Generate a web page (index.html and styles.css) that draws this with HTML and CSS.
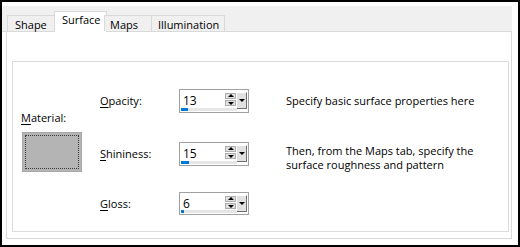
FILE: index.html
```
<!DOCTYPE html>
<html lang="en">
<head>
  <meta charset="UTF-8" />
  <title>Surface</title>
  <link rel="stylesheet" href="styles.css">
</head>
<body>
  <div class="window">
    <div class="tabs">
      <div class="tab tab-shape">Shape</div>
      <div class="tab tab-surface active">Surface</div>
      <div class="tab tab-maps">Maps</div>
      <div class="tab tab-illum">Illumination</div>
    </div>
    <div class="panel">
      <div class="group">
        <div class="material">
          <div class="material-label"><u>M</u>aterial:</div>
          <div class="swatch"><div class="focus"></div></div>
        </div>

        <div class="field-label row1"><u>O</u>pacity:</div>
        <div class="spin row1">
          <span class="spin-value">13</span>
          <div class="spin-arrows">
            <span class="arrow up"></span>
            <span class="arrow down"></span>
          </div>
          <span class="spin-drop"></span>
          <div class="track"><div class="fill" style="width: 13%"></div></div>
        </div>
        <div class="hint row1">Specify basic surface properties here</div>

        <div class="field-label row2"><u>S</u>hininess:</div>
        <div class="spin row2">
          <span class="spin-value">15</span>
          <div class="spin-arrows">
            <span class="arrow up"></span>
            <span class="arrow down"></span>
          </div>
          <span class="spin-drop"></span>
          <div class="track"><div class="fill" style="width: 15%"></div></div>
        </div>
        <div class="hint row2 two-line">Then, from the Maps tab, specify the<br>surface roughness and pattern</div>

        <div class="field-label row3"><u>G</u>loss:</div>
        <div class="spin row3">
          <span class="spin-value">6</span>
          <div class="spin-arrows">
            <span class="arrow up"></span>
            <span class="arrow down"></span>
          </div>
          <span class="spin-drop"></span>
          <div class="track"><div class="fill" style="width: 6%"></div></div>
        </div>
      </div>
    </div>
  </div>
</body>
</html>
```

FILE: styles.css
```
* {
  box-sizing: border-box;
}
body {
  margin: 0;
  font-family: "Open Sans", "Noto Sans", sans-serif;
  font-size: 11px;
  color: #000;
}
u {
  text-decoration-thickness: 1px;
  text-underline-offset: 2px;
}
.window {
  width: 520px;
  height: 247px;
  border: 2px solid #000;
  background: #fff;
  padding-top: 4px;
}
.tabs {
  display: flex;
  align-items: flex-end;
  height: 26px;
  margin-right: 6px;
  padding-left: 5px;
  background: #f0f0f0;
  border-bottom: 1px solid #d9d9d9;
}
.tab {
  height: 16px;
  padding-left: 6px;
  line-height: 17px;
  background: #f0f0f0;
  border: 1px solid #d9d9d9;
  border-bottom: none;
  margin-left: -1px;
}
.tab-shape { width: 49px; margin-left: 0; padding-left: 7px; }
.tab-surface { width: 53px; }
.tab-maps { width: 48px; padding-left: 5px; }
.tab-illum { width: 74px; }
.tab.active {
  height: 21px;
  margin-bottom: -1px;
  margin-left: -2px;
  margin-right: -2px;
  padding-left: 7px;
  line-height: 16px;
  background: #fff;
}
.panel {
  height: 207px;
  margin: 0 6px 0 4px;
  border: 1px solid #d9d9d9;
  border-top: none;
  padding: 29px 2px 6px 5px;
}
.group {
  height: 171px;
  border: 1px solid #dcdcdc;
  padding: 27px 0 0 8px;
  display: grid;
  grid-template-columns: 79px 79px 107px 1fr;
  grid-template-rows: 53px 50px 24px;
}
.material {
  grid-column: 1;
  grid-row: 1 / span 3;
  padding-top: 21px;
}
.material-label {
  line-height: 16px;
}
.swatch {
  width: 60px;
  height: 40px;
  margin-top: 6px;
  margin-left: 1px;
  background: #b4b4b4;
  border: 1px solid #a8a8a8;
  padding: 2px;
}
.focus {
  width: 100%;
  height: 100%;
  border: 1px dotted #3c3c3c;
}
.field-label {
  grid-column: 2;
  line-height: 24px;
}
.row1 { grid-row: 1; }
.row2 { grid-row: 2; }
.row3 { grid-row: 3; }
.spin {
  grid-column: 3;
  position: relative;
  width: 70px;
  height: 24px;
  border: 1px solid #a0a0a0;
  background: #fff;
  display: flex;
  align-items: flex-start;
  padding: 3px 1px 0 3px;
}
.spin.row3 { height: 23px; }
.spin-value {
  flex: 1;
  line-height: 16px;
  font-size: 12px;
}
.spin-arrows {
  display: flex;
  flex-direction: column;
  width: 11px;
}
.arrow {
  height: 6px;
  margin-bottom: 1px;
  background: #e1e1e1;
  border: 1px solid #adadad;
  position: relative;
}
.arrow::after {
  content: "";
  position: absolute;
  left: 2px;
  width: 0;
  height: 0;
  border-left: 3px solid transparent;
  border-right: 3px solid transparent;
}
.arrow.up::after {
  top: 0;
  border-bottom: 3px solid #000;
}
.arrow.down::after {
  top: 1px;
  border-top: 3px solid #000;
}
.spin-drop {
  position: relative;
  width: 11px;
  height: 17px;
  margin-top: -1px;
  background: #e1e1e1;
  border-right: 1px solid #707070;
  border-bottom: 1px solid #707070;
  border-left: 1px solid #fff;
  border-top: 1px solid #fff;
}
.spin-drop::after {
  content: "";
  position: absolute;
  left: 2px;
  top: 6px;
  border-left: 3px solid transparent;
  border-right: 3px solid transparent;
  border-top: 3px solid #000;
}
.track {
  position: absolute;
  left: 1px;
  bottom: 1px;
  width: 56px;
  height: 3px;
  background: #e6e6e6;
}
.fill {
  height: 100%;
  background: #0078d7;
}
.hint {
  grid-column: 4;
  line-height: 24px;
}
.hint.two-line {
  line-height: 14px;
  padding-top: 2px;
}
```
